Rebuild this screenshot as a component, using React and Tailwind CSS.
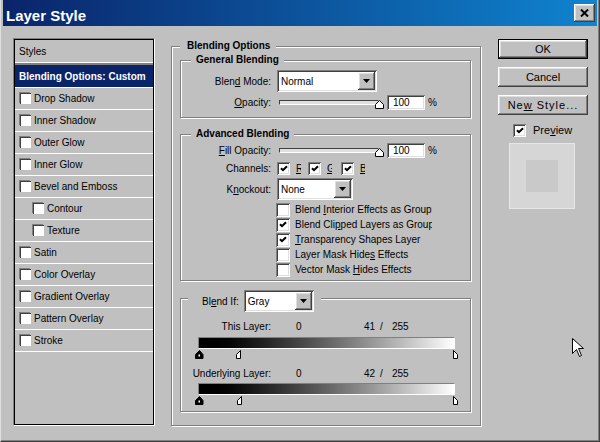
import React from "react";

const raised =
  "shadow-[inset_-1px_-1px_0_#404040,inset_1px_1px_0_#ffffff,inset_-2px_-2px_0_#808080,inset_2px_2px_0_#dfdfdf]";
const sunken =
  "shadow-[inset_1px_1px_0_#808080,inset_-1px_-1px_0_#ffffff,inset_2px_2px_0_#404040,inset_-2px_-2px_0_#dfdfdf]";

const styleItems = [
  ["Drop Shadow", false],
  ["Inner Shadow", false],
  ["Outer Glow", false],
  ["Inner Glow", false],
  ["Bevel and Emboss", false],
  ["Contour", true],
  ["Texture", true],
  ["Satin", false],
  ["Color Overlay", false],
  ["Gradient Overlay", false],
  ["Pattern Overlay", false],
  ["Stroke", false],
];

function Check({ on, size = "h-[13px] w-[13px]" }) {
  return (
    <span className={`flex shrink-0 items-center justify-center bg-white ${sunken} ${size}`}>
      {on && (
        <svg width="8" height="7" viewBox="0 0 8 7">
          <path d="M1 3.2 L3 5.2 L7 1.2" fill="none" stroke="#000" strokeWidth="2" />
        </svg>
      )}
    </span>
  );
}

function Select({ value, w }) {
  return (
    <div className={`flex h-[22px] items-center bg-white pl-[4px] pr-[2px] ${sunken} ${w}`}>
      <span className="flex-1 leading-[13px]">{value}</span>
      <span className={`flex h-[18px] w-[17px] items-center justify-center bg-[#c0c0c0] ${raised}`}>
        <svg width="7" height="4" viewBox="0 0 7 4">
          <path d="M0 0 H7 L3.5 4 Z" fill="#000" />
        </svg>
      </span>
    </div>
  );
}

function Slider() {
  return (
    <div className="relative ml-[8px] flex h-[15px] w-[100px] items-center">
      <div className="h-[5px] w-full border border-[#404040] border-b-white border-r-white bg-[#dfdfdf]" />
      <svg className="absolute left-[96px] top-[5px]" width="9" height="9" viewBox="0 0 9 9">
        <path d="M0.5 8.5 V4.5 L4.5 0.5 L8.5 4.5 V8.5 Z" fill="#fff" stroke="#000" />
      </svg>
    </div>
  );
}

function Field({ value }) {
  return (
    <div className={`ml-[8px] flex h-[15px] w-[38px] items-center bg-white pl-[6px] leading-[13px] ${sunken}`}>
      {value}
    </div>
  );
}

function Group({ title, className, children }) {
  return (
    <div
      className={`relative ml-[8px] w-[291px] border border-[#808080] shadow-[1px_1px_0_#ffffff,inset_1px_1px_0_#ffffff] ${className}`}
    >
      <span className="absolute left-[10px] top-[-8px] bg-[#c0c0c0] px-[5px] font-bold leading-[13px]">
        {title}
      </span>
      {children}
    </div>
  );
}

function LayerRow({ label, mid }) {
  return (
    <div className="flex h-[13px] items-center leading-[13px]">
      <span className="w-[90px] text-right">{label}</span>
      <span className="ml-[25px] w-[60px]">0</span>
      <span className="w-[19px] text-right">{mid}</span>
      <span className="ml-[5px] w-[12px]">/</span>
      <span>255</span>
    </div>
  );
}

function GradientBar({ split }) {
  return (
    <>
      <div className="ml-[17px] mt-[4px] h-[12px] w-[257px] border border-[#808080] border-b-white border-r-white bg-linear-to-r from-black to-white" />
      <div className="relative ml-[17px] mt-[1px] h-[9px] w-[257px]">
        <svg className="absolute left-[-3px] top-0" width="9" height="9" viewBox="0 0 9 9">
          <path d="M0.5 8.5 V4.5 L4 1 L4.5 0.5 L8 4.5 V8.5 Z" fill="#000" stroke="#000" />
          <rect x="3.5" y="4.5" width="1.5" height="2" fill="#fff" />
        </svg>
        <svg className={`absolute top-0 ${split}`} width="6" height="9" viewBox="0 0 6 9">
          <path d="M4.5 0.5 V8.5 H0.5 V4.5 Z" fill="#fff" stroke="#000" />
        </svg>
        <svg className="absolute left-[255px] top-0" width="6" height="9" viewBox="0 0 6 9">
          <path d="M0.5 0.5 V8.5 H4.5 V4.5 Z" fill="#fff" stroke="#000" />
        </svg>
      </div>
    </>
  );
}

function Button({ children, isDefault }) {
  return (
    <button
      className={`flex h-[20px] w-[90px] items-center justify-center bg-[#c0c0c0] text-[11px] leading-[13px] ${
        isDefault ? "border border-black" : ""
      } ${raised}`}
    >
      {children}
    </button>
  );
}

export default function App() {
  return (
    <div className="relative h-[442px] w-[600px] overflow-hidden border-b border-l border-r border-b-[#404040] border-l-[#dfdfdf] border-r-[#404040] bg-[#c0c0c0] font-['Liberation_Sans',Arial,sans-serif] text-[10px] text-black shadow-[inset_-1px_-1px_0_#808080]">
      {/* title bar */}
      <div className="mx-[2px] flex h-[26px] items-start justify-between bg-linear-to-r from-[#0a246a] to-[#1084d0] pl-[3px] pr-[2px]">
        <span className="pt-[7px] text-[15px] font-bold leading-[17px] text-white">Layer Style</span>
        <button className={`mt-[4px] flex h-[18px] w-[21px] items-center justify-center bg-[#c0c0c0] ${raised}`}>
          <svg width="9" height="8" viewBox="0 0 9 8">
            <path d="M1 0.5 L8 7.5 M8 0.5 L1 7.5" stroke="#000" strokeWidth="2" />
          </svg>
        </button>
      </div>

      <div className="flex pl-[12px] pt-[12px]">
        {/* styles list */}
        <div className="h-[388px] w-[142px] border border-[#808080] border-b-white border-r-white">
          <div className="h-full border border-black">
            <div className="flex h-[23px] items-center border-b border-white pl-[4px]">Styles</div>
            <div className="h-[2px] bg-[#808080]" />
            <div className="flex h-[23px] items-center border-b border-white bg-[#0a246a] pl-[4px] font-bold text-white">
              Blending Options: Custom
            </div>
            {styleItems.map(([name, sub]) => (
              <div
                key={name}
                className={`flex h-[22px] items-center border-b border-white ${sub ? "pl-[18px]" : "pl-[5px]"}`}
              >
                <span className="h-[11px] w-[11px] shrink-0 border-l border-t border-[#404040] bg-white shadow-[-1px_-1px_0_#808080]" />
                <span className="ml-[3px]">{name}</span>
              </div>
            ))}
          </div>
        </div>

        {/* blending options */}
        <div className="relative ml-[16px] mt-[8px] h-[380px] w-[310px] border border-[#808080] shadow-[1px_1px_0_#ffffff,inset_1px_1px_0_#ffffff]">
          <span className="absolute left-[8px] top-[-8px] bg-[#c0c0c0] pl-[7px] pr-[6px] font-bold leading-[13px]">
            Blending Options
          </span>

          <Group title="General Blending" className="mt-[13px] h-[58px] pt-[9px]">
            <div className="flex h-[22px] items-center">
              <span className="w-[90px] text-right">
                Blen<u>d</u> Mode:
              </span>
              <div className="ml-[6px]">
                <Select value="Normal" w="w-[100px]" />
              </div>
            </div>
            <div className="mt-[3px] flex h-[15px] items-center">
              <span className="w-[90px] text-right">
                <u>O</u>pacity:
              </span>
              <Slider />
              <Field value="100" />
              <span className="ml-[3px] self-start">%</span>
            </div>
          </Group>

          <Group title="Advanced Blending" className="mt-[16px] h-[147px] pt-[8px]">
            <div className="flex h-[15px] items-center">
              <span className="w-[90px] text-right">
                <u>F</u>ill Opacity:
              </span>
              <Slider />
              <Field value="100" />
              <span className="ml-[3px] self-start">%</span>
            </div>
            <div className="mt-[3px] flex h-[14px] items-center">
              <span className="w-[90px] text-right">Channels:</span>
              <span className="ml-[6px]">
                <Check on />
              </span>
              <span className="ml-[6px] w-[5px] overflow-hidden underline">R</span>
              <span className="ml-[7px]">
                <Check on />
              </span>
              <span className="ml-[6px] w-[5px] overflow-hidden underline">G</span>
              <span className="ml-[9px]">
                <Check on />
              </span>
              <span className="ml-[6px] w-[5px] overflow-hidden underline">B</span>
            </div>
            <div className="mt-[3px] flex h-[22px] items-center">
              <span className="w-[90px] text-right">
                K<u>n</u>ockout:
              </span>
              <div className="ml-[6px]">
                <Select value="None" w="w-[76px]" />
              </div>
            </div>
            <div className="ml-[95px] mt-[2px] w-[156px] overflow-hidden whitespace-nowrap">
              {[
                [false, <>Blend <u>I</u>nterior Effects as Group</>],
                [true, <>Blend Cli<u>p</u>ped Layers as Group</>],
                [true, <><u>T</u>ransparency Shapes Layer</>],
                [false, <>Layer Mask Hide<u>s</u> Effects</>],
                [false, <>Vector Mask <u>H</u>ides Effects</>],
              ].map(([on, label], i) => (
                <div key={i} className="flex h-[15px] items-center">
                  <Check on={on} size="h-[14px] w-[14px]" />
                  <span className="ml-[5px]">{label}</span>
                </div>
              ))}
            </div>
          </Group>

          <div className="relative ml-[8px] mt-[17px] h-[114px] w-[291px] border border-[#808080] pt-[21px] shadow-[1px_1px_0_#ffffff,inset_1px_1px_0_#ffffff]">
            <div className="absolute left-[7px] top-[-9px] flex items-center bg-[#c0c0c0] pl-[14px] pr-[7px]">
              <span>
                Bl<u>e</u>nd If:
              </span>
              <div className="ml-[5px]">
                <Select value="Gray" w="w-[70px]" />
              </div>
            </div>
            <LayerRow label="This Layer:" mid="41" />
            <GradientBar split="left-[38px]" />
            <div className="mt-[8px]">
              <LayerRow label="Underlying Layer:" mid="42" />
            </div>
            <div className="-mt-[1px]">
              <GradientBar split="left-[39px]" />
            </div>
          </div>
        </div>

        {/* buttons */}
        <div className="ml-[17px] mt-[1px] flex w-[90px] flex-col">
          <Button isDefault>OK</Button>
          <div className="mt-[8px]">
            <Button>Cancel</Button>
          </div>
          <div className="mt-[8px]">
            <Button>
              <span className="tracking-[1px]">
                Ne<u>w</u> Style...
              </span>
            </Button>
          </div>
          <div className="ml-[15px] mt-[8px] flex h-[14px] items-center">
            <Check on />
            <span className="ml-[7px] text-[11px]">
              Pre<u>v</u>iew
            </span>
          </div>
          <div className="ml-[11px] mt-[6px] flex h-[66px] w-[66px] items-center justify-center border border-[#e6e6e6] bg-[#d6d6d6]">
            <div className="h-[32px] w-[32px] bg-[#c9c9c9]" />
          </div>
        </div>
      </div>

      {/* mouse pointer */}
      <svg className="absolute left-[571px] top-[338px]" width="13" height="20" viewBox="0 0 13 20">
        <path
          d="M0.5 0.5 V15.5 L4.5 11.5 L7.5 18.5 L9.5 17.5 L6.5 10.5 H11.5 Z"
          fill="#fff"
          stroke="#000"
        />
      </svg>
    </div>
  );
}
